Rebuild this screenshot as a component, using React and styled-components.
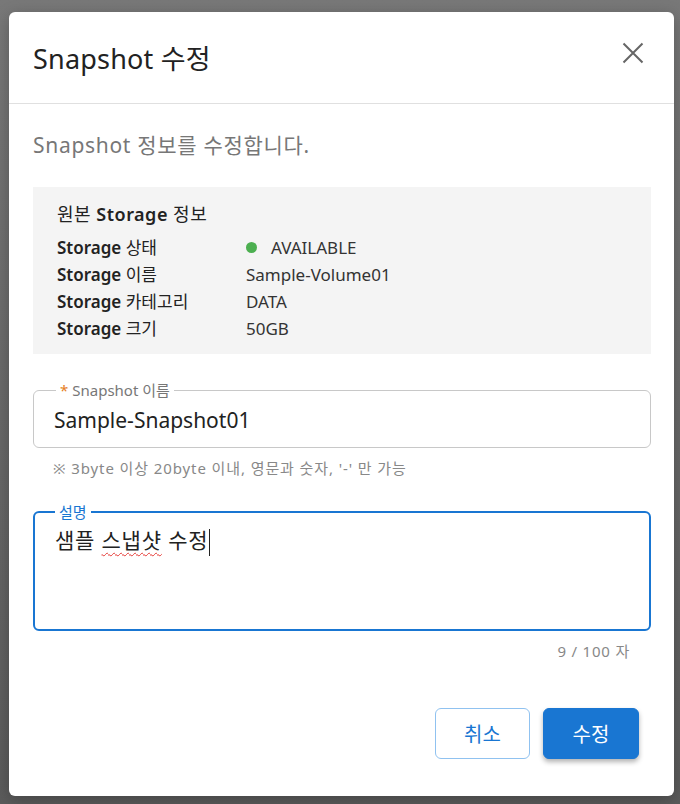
import React from 'react';
import styled, { createGlobalStyle } from 'styled-components';

const GlobalStyle = createGlobalStyle`
  html, body {
    margin: 0;
    padding: 0;
  }
  body {
    font-family: 'Noto Sans', 'Noto Sans CJK KR', sans-serif;
  }
`;

const Overlay = styled.div`
  width: 680px;
  height: 804px;
  box-sizing: border-box;
  padding: 12px 6px 8px 9px;
  background: linear-gradient(#787878, #5b5b5b);
  overflow: hidden;
`;

const Modal = styled.div`
  width: 665px;
  height: 784px;
  background: #ffffff;
  border-radius: 6px;
  box-shadow: 0 4px 16px rgba(0, 0, 0, 0.25);
  display: flex;
  flex-direction: column;
`;

const Header = styled.div`
  height: 92px;
  box-sizing: border-box;
  display: flex;
  align-items: center;
  justify-content: space-between;
  padding: 0 30px 0 24px;
  border-bottom: 1px solid #e0e0e0;
`;

const Title = styled.h2`
  margin: 0;
  font-size: 27px;
  font-weight: 400;
  letter-spacing: 0.2px;
  color: #222;
`;

const CloseButton = styled.button`
  border: none;
  background: none;
  padding: 0;
  margin-top: -10px;
  display: flex;
  color: #666;
  cursor: pointer;
`;

const Body = styled.div`
  flex: 1;
  display: flex;
  flex-direction: column;
  padding: 29px 23px 0 24px;
`;

const Description = styled.p`
  margin: 0;
  font-size: 21px;
  line-height: 24px;
  letter-spacing: 0.7px;
  color: #777;
`;

const InfoBox = styled.div`
  margin-top: 30px;
  background: #f4f4f4;
  padding: 15px 24px 12px;
`;

const InfoTitle = styled.div`
  font-size: 18px;
  line-height: 24px;
  letter-spacing: 0.5px;
  color: #222;
  margin-bottom: 8px;

  b {
    font-weight: 600;
  }
`;

const InfoRow = styled.div`
  display: flex;
  font-size: 17px;
  line-height: 27px;
  color: #222;
`;

const InfoLabel = styled.div`
  width: 189px;

  b {
    font-weight: 600;
  }
`;

const InfoValue = styled.div`
  display: flex;
  align-items: center;
  color: #333;
`;

const StatusDot = styled.span`
  width: 11px;
  height: 11px;
  border-radius: 50%;
  background: #4caf50;
  margin-right: 14px;
`;

const Field = styled.fieldset`
  margin: ${(p) => p.$top}px 0 0;
  padding: 0 20px;
  min-width: 0;
  border: ${(p) => (p.$focused ? '2.5px solid #1976d2' : '1px solid #c8c8c8')};
  border-radius: 6px;
  height: ${(p) => p.$height}px;
  box-sizing: border-box;
`;

const Legend = styled.legend`
  margin-left: ${(p) => p.$offset}px;
  padding: 0 4px;
  font-size: 15px;
  line-height: 16px;
  color: ${(p) => (p.$focused ? '#1976d2' : '#777')};
`;

const Required = styled.span`
  color: #e67e22;
  margin-right: 4px;
`;

const InputText = styled.div`
  font-size: 21px;
  line-height: 28px;
  letter-spacing: ${(p) => p.$spacing || 0}px;
  color: #222;
  padding-top: ${(p) => p.$pad}px;
`;

const Misspelled = styled.span`
  text-decoration: underline wavy #e53935;
  text-decoration-thickness: 1px;
  text-underline-offset: 4px;
`;

const Caret = styled.span`
  display: inline-block;
  width: 1px;
  height: 27px;
  background: #222;
  vertical-align: middle;
  margin-left: 1px;
`;

const Helper = styled.div`
  margin: 10px 0 0 20px;
  font-size: 15px;
  line-height: 20px;
  letter-spacing: 0.9px;
  color: #888;
`;

const Counter = styled.div`
  margin: 10px 21px 0 0;
  text-align: right;
  font-size: 15px;
  line-height: 20px;
  letter-spacing: 0.8px;
  color: #888;
`;

const Footer = styled.div`
  display: flex;
  justify-content: flex-end;
  gap: 13px;
  padding: 47px 12px 0 0;
`;

const Button = styled.button`
  width: ${(p) => (p.$primary ? 96 : 95)}px;
  height: 51px;
  border-radius: 6px;
  font-family: inherit;
  font-size: 20px;
  cursor: pointer;
  border: 1px solid ${(p) => (p.$primary ? '#1976d2' : '#90c2f0')};
  background: ${(p) => (p.$primary ? '#1976d2' : '#ffffff')};
  color: ${(p) => (p.$primary ? '#ffffff' : '#1976d2')};
  box-shadow: ${(p) => (p.$primary ? '0 3px 5px rgba(0, 0, 0, 0.3)' : 'none')};
`;

const rows = [
  { label: '상태', value: 'AVAILABLE', status: true },
  { label: '이름', value: 'Sample-Volume01' },
  { label: '카테고리', value: 'DATA' },
  { label: '크기', value: '50GB' },
];

function CloseIcon() {
  return (
    <svg width="22" height="22" viewBox="0 0 22 22" fill="none" stroke="currentColor" strokeWidth="2">
      <path d="M1.5 1.5L20.5 20.5M20.5 1.5L1.5 20.5" />
    </svg>
  );
}

export default function App() {
  return (
    <>
      <GlobalStyle />
      <Overlay>
        <Modal>
          <Header>
            <Title>Snapshot 수정</Title>
            <CloseButton aria-label="닫기">
              <CloseIcon />
            </CloseButton>
          </Header>
          <Body>
            <Description>Snapshot 정보를 수정합니다.</Description>
            <InfoBox>
              <InfoTitle>
                원본 <b>Storage</b> 정보
              </InfoTitle>
              {rows.map((r) => (
                <InfoRow key={r.label}>
                  <InfoLabel>
                    <b>Storage</b> {r.label}
                  </InfoLabel>
                  <InfoValue>
                    {r.status && <StatusDot />}
                    {r.value}
                  </InfoValue>
                </InfoRow>
              ))}
            </InfoBox>
            <Field $top={28} $height={66}>
              <Legend $offset={2}>
                <Required>*</Required>Snapshot 이름
              </Legend>
              <InputText $pad={8}>Sample-Snapshot01</InputText>
            </Field>
            <Helper>※ 3byte 이상 20byte 이내, 영문과 숫자, '-' 만 가능</Helper>
            <Field $top={26} $height={127} $focused>
              <Legend $offset={0} $focused>
                설명
              </Legend>
              <InputText $pad={6} $spacing={0.8}>
                샘플 <Misspelled>스냅샷</Misspelled> 수정
                <Caret />
              </InputText>
            </Field>
            <Counter>9 / 100 자</Counter>
            <Footer>
              <Button>취소</Button>
              <Button $primary>수정</Button>
            </Footer>
          </Body>
        </Modal>
      </Overlay>
    </>
  );
}
